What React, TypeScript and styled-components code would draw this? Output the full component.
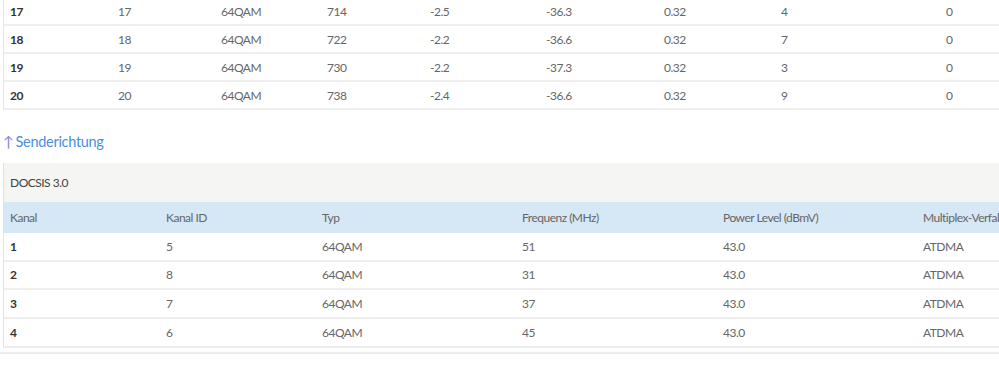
import { FC } from 'react';
import styled, { createGlobalStyle } from 'styled-components';

const Global = createGlobalStyle`
  html, body { margin: 0; padding: 0; background: #fff; overflow: hidden; }
  body {
    font-family: "Source Sans Pro", Lato, "Open Sans", sans-serif;
    font-size: 12px;
    letter-spacing: -0.5px;
    color: #555;
  }
`;

const Page = styled.div`
  width: 999px;
  height: 366px;
  overflow: hidden;
  padding-left: 3px;
  box-sizing: border-box;
`;

const DownTable = styled.div`
  margin-top: -2px;
  border-left: 1px solid #e6e6e6;
`;

type ColProps = { cols: string };

const Row = styled.div<ColProps>`
  display: grid;
  grid-template-columns: ${(p) => p.cols};
  height: 28px;
  align-items: center;
  border-bottom: 2px solid #eeeeee;
  box-sizing: border-box;
`;

const Cell = styled.div<{ bold?: boolean }>`
  padding-left: 6px;
  white-space: nowrap;
  font-weight: ${(p) => (p.bold ? 700 : 400)};
  color: ${(p) => (p.bold ? '#333' : '#666')};
`;

const Heading = styled.div`
  margin: 20px 0 11px 0;
  font-size: 14.5px;
  letter-spacing: -0.3px;
  color: #4a8fe0;
  display: flex;
  align-items: center;
  gap: 2px;
  height: 22px;
`;

const Arrow = styled.span`
  color: #7d86dc;
`;

const Panel = styled.div`
  border-left: 1px solid #e2e2e2;
  border-bottom: 2px solid #ececec;
  width: 1200px;
`;

const PanelTitle = styled.div`
  background: #f5f5f3;
  height: 39px;
  display: flex;
  align-items: center;
  padding-left: 6px;
  color: #444;
`;

const HeadRow = styled(Row)`
  background: #d6e7f5;
  height: 31px;
  border-bottom: none;
  color: #555;
`;

const UpRow = styled(Row)`
  height: 28.5px;
  &:last-child { border-bottom: none; height: 27px; }
`;

const Footer = styled.div`
  margin: 4px 0 0 -3px;
  border-top: 2px solid #ececec;
`;

const downCols = '108px 103px 106px 103px 116px 118px 117px 165px 1fr';
const upCols = '156px 156px 200px 201px 200px 1fr';

const down = [
  ['17', '17', '64QAM', '714', '-2.5', '-36.3', '0.32', '4', '0'],
  ['18', '18', '64QAM', '722', '-2.2', '-36.6', '0.32', '7', '0'],
  ['19', '19', '64QAM', '730', '-2.2', '-37.3', '0.32', '3', '0'],
  ['20', '20', '64QAM', '738', '-2.4', '-36.6', '0.32', '9', '0'],
];

const up = [
  ['1', '5', '64QAM', '51', '43.0', 'ATDMA'],
  ['2', '8', '64QAM', '31', '43.0', 'ATDMA'],
  ['3', '7', '64QAM', '37', '43.0', 'ATDMA'],
  ['4', '6', '64QAM', '45', '43.0', 'ATDMA'],
];

const App: FC = () => {
  return (
    <Page>
      <Global />
      <DownTable>
        {down.map((r) => (
          <Row cols={downCols} key={r[0]}>
            {r.map((c, i) => (
              <Cell key={i} bold={i === 0}>{c}</Cell>
            ))}
          </Row>
        ))}
      </DownTable>
      <Heading>
        <Arrow>↑</Arrow>Senderichtung
      </Heading>
      <Panel>
        <PanelTitle>DOCSIS 3.0</PanelTitle>
        <HeadRow cols={upCols}>
          <Cell>Kanal</Cell>
          <Cell>Kanal ID</Cell>
          <Cell>Typ</Cell>
          <Cell>Frequenz (MHz)</Cell>
          <Cell>Power Level (dBmV)</Cell>
          <Cell>Multiplex-Verfahren</Cell>
        </HeadRow>
        {up.map((r) => (
          <UpRow cols={upCols} key={r[0]}>
            {r.map((c, i) => (
              <Cell key={i} bold={i === 0}>{c}</Cell>
            ))}
          </UpRow>
        ))}
      </Panel>
      <Footer />
    </Page>
  );
};

export default App;
